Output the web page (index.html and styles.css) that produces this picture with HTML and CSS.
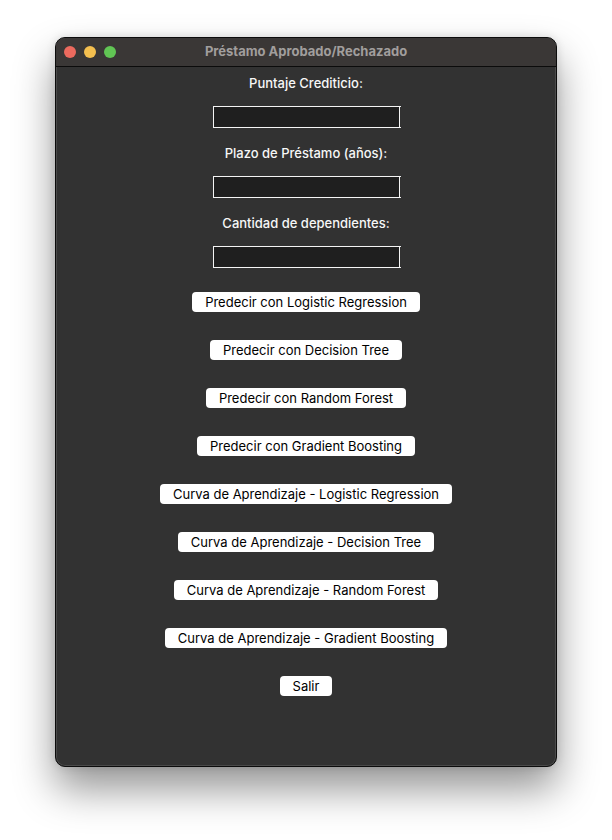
FILE: index.html
```html
<!DOCTYPE html>
<html lang="es">
<head>
<meta charset="utf-8">
<title>Préstamo Aprobado/Rechazado</title>
<link rel="stylesheet" href="styles.css">
</head>
<body>
<div class="window">
  <div class="titlebar">
    <div class="lights">
      <span class="light red"></span>
      <span class="light yellow"></span>
      <span class="light green"></span>
    </div>
    <div class="title">Préstamo Aprobado/Rechazado</div>
  </div>
  <div class="content">
    <div class="label">Puntaje Crediticio:</div>
    <div class="entry"></div>
    <div class="label">Plazo de Préstamo (años):</div>
    <div class="entry"></div>
    <div class="label">Cantidad de dependientes:</div>
    <div class="entry"></div>
    <div class="buttons">
      <div class="btn">Predecir con Logistic Regression</div>
      <div class="btn">Predecir con Decision Tree</div>
      <div class="btn">Predecir con Random Forest</div>
      <div class="btn">Predecir con Gradient Boosting</div>
      <div class="btn">Curva de Aprendizaje - Logistic Regression</div>
      <div class="btn">Curva de Aprendizaje - Decision Tree</div>
      <div class="btn">Curva de Aprendizaje - Random Forest</div>
      <div class="btn">Curva de Aprendizaje - Gradient Boosting</div>
      <div class="btn">Salir</div>
    </div>
  </div>
</div>
</body>
</html>
```
FILE: styles.css
```css
html, body {
  margin: 0;
  padding: 0;
  background: #ffffff;
}
body {
  box-sizing: border-box;
  min-height: 840px;
  padding: 37px 0 0 55px;
  font-family: Inter, "Liberation Sans", Arial, sans-serif;
}
.window {
  width: 502px;
  height: 730px;
  box-sizing: border-box;
  background: #323232;
  border: 1px solid #0c0c0c;
  border-radius: 10px;
  box-shadow: 0 0 0 1px rgba(255,255,255,0.12) inset, 0 22px 40px rgba(0,0,0,0.42), 0 0 10px rgba(0,0,0,0.12);
  overflow: hidden;
  display: flex;
  flex-direction: column;
}
.titlebar {
  height: 28px;
  flex: none;
  background: #3a3736;
  border-bottom: 1px solid #0b0b0b;
  display: flex;
  align-items: center;
  position: relative;
}
.lights {
  display: flex;
  gap: 8px;
  padding-left: 8px;
}
.light {
  width: 12px;
  height: 12px;
  border-radius: 50%;
  display: block;
}
.red { background: #ec6a5e; }
.yellow { background: #f4bf4f; }
.green { background: #61c554; }
.title {
  position: absolute;
  left: 0;
  right: 0;
  top: 0;
  line-height: 27px;
  text-align: center;
  color: #a19e9d;
  font-weight: 700;
  font-size: 13px;
}
.content {
  display: flex;
  flex-direction: column;
  align-items: center;
  padding-top: 7px;
}
.label {
  color: #f7f7f7;
  font-size: 13px;
  font-weight: 500;
  line-height: 18px;
  height: 18px;
  margin-top: 16px;
}
.label:first-child {
  margin-top: 0;
}
.entry {
  margin-top: 14px;
  width: 187px;
  height: 22px;
  box-sizing: border-box;
  border: 1px solid #f4f4f4;
  background: #1f1f1f;
  position: relative;
}
.entry::before,
.entry::after {
  content: "";
  position: absolute;
  right: -2px;
  width: 1px;
  height: 1px;
  background: #f4f4f4;
}
.entry::before { top: -1px; }
.entry::after { bottom: -1px; }
.buttons {
  margin-top: 24px;
  display: flex;
  flex-direction: column;
  align-items: center;
  gap: 28px;
}
.btn {
  height: 20px;
  line-height: 20px;
  padding: 0 13px;
  background: #ffffff;
  color: #000000;
  border-radius: 4px;
  font-size: 13px;
  white-space: nowrap;
}
```
